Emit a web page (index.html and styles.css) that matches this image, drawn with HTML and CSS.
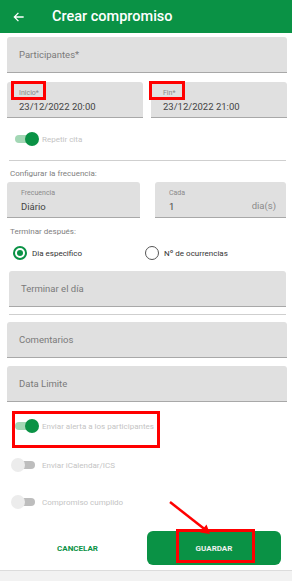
FILE: index.html
```html
<!DOCTYPE html>
<html lang="es">
  <head>
    <meta charset="UTF-8" />
    <title>Crear compromiso</title>
    <meta name="viewport" content="width=device-width, initial-scale=1.0" />
    <link rel="stylesheet" href="styles.css">
  </head>
  <body>
    <header class="topbar">
      <svg class="back" width="14" height="14" viewBox="0 0 24 24">
        <path d="M20 12H5M11 5l-7 7 7 7" fill="none" stroke="#fff" stroke-width="2.2" />
      </svg>
      <h1>Crear compromiso</h1>
    </header>

    <div class="form">
      <div class="field field-wide">
        <span class="placeholder">Participantes*</span>
      </div>

      <div class="row-dates">
        <div class="field field-small">
          <span class="label">Inicio*</span>
          <span class="value">23/12/2022 20:00</span>
          <span class="mark mark-label"></span>
        </div>
        <div class="field field-small">
          <span class="label">Fin*</span>
          <span class="value">23/12/2022 21:00</span>
          <span class="mark mark-label mark-fin"></span>
        </div>
      </div>

      <div class="toggle-row repeat">
        <span class="toggle on"><span class="knob"></span></span>
        <span class="toggle-text">Repetir cita</span>
      </div>

      <div class="divider"></div>

      <div class="section-title first">Configurar la frecuencia:</div>

      <div class="row-freq">
        <div class="field field-small">
          <span class="label">Frecuencia</span>
          <span class="value">Diário</span>
        </div>
        <div class="field field-small">
          <span class="label">Cada</span>
          <span class="value">1</span>
          <span class="suffix">dia(s)</span>
        </div>
      </div>

      <div class="section-title">Terminar después:</div>

      <div class="radios">
        <label class="radio checked"><span class="circle"></span>Dia especifico</label>
        <label class="radio"><span class="circle"></span>Nº de ocurrencias</label>
      </div>

      <div class="field field-end">
        <span class="placeholder">Terminar el día</span>
      </div>
      <div class="divider divider-end"></div>

      <div class="field field-wide field-comments">
        <span class="placeholder">Comentarios</span>
      </div>

      <div class="field field-wide field-limit">
        <span class="placeholder">Data Limite</span>
      </div>

      <div class="toggle-row alert">
        <span class="toggle on"><span class="knob"></span></span>
        <span class="toggle-text">Enviar alerta a los participantes</span>
        <span class="mark mark-alert"></span>
      </div>

      <div class="toggle-row ics">
        <span class="toggle"><span class="knob"></span></span>
        <span class="toggle-text">Enviar iCalendar/ICS</span>
      </div>

      <div class="toggle-row done">
        <span class="toggle"><span class="knob"></span></span>
        <span class="toggle-text">Compromiso cumplido</span>
      </div>

      <div class="actions">
        <button class="btn-cancel">CANCELAR</button>
        <button class="btn-save">
          GUARDAR
          <span class="mark mark-save"></span>
        </button>
        <!-- annotation arrow -->
        <svg class="arrow" width="50" height="40" viewBox="0 0 50 40">
          <path d="M3 2L40 31" stroke="#f00" stroke-width="2.5" fill="none" />
          <path d="M43 34L33 32.5L39.5 24.5Z" fill="#f00" />
        </svg>
      </div>
    </div>

    <div class="bottombar"></div>
  </body>
</html>
```

FILE: styles.css
```css
body {
  margin: 0;
  font-family: Roboto, "Liberation Sans", Arial, sans-serif;
  background: #fff;
  color: #333;
}

.topbar {
  height: 33px;
  background: #0a9245;
  display: flex;
  align-items: center;
  padding-left: 12px;
}

.back {
  display: block;
}

.topbar h1 {
  margin: 0 0 0 26px;
  color: #fff;
  font-size: 14.5px;
  font-weight: 500;
}

.form {
  padding-top: 4px;
}

.field {
  position: relative;
  box-sizing: border-box;
  height: 36px;
  background: #e0e0e0;
  border-bottom: 1px solid #a8a8a8;
  border-radius: 3px 3px 0 0;
}

.field-wide {
  margin: 0 5px 0 7px;
  display: flex;
  align-items: center;
  padding-left: 12px;
}

.placeholder {
  font-size: 9.5px;
  color: #7a7a7a;
}

.row-dates {
  display: grid;
  grid-template-columns: 136px 136px;
  gap: 8px;
  margin: 9px 0 0 7px;
}

.field-small {
  padding: 7px 0 0 12px;
  display: flex;
  flex-direction: column;
}

.label {
  font-size: 7px;
  color: #8a8a8a;
  line-height: 9px;
}

.value {
  font-size: 9.5px;
  color: #444;
  margin-top: 3px;
}

.suffix {
  position: absolute;
  right: 10px;
  top: 18px;
  font-size: 9.5px;
  color: #8a8a8a;
}

.toggle-row {
  position: relative;
  height: 20px;
  display: flex;
  align-items: center;
  padding-left: 11px;
}

.repeat {
  margin-top: 11px;
}

.toggle {
  position: relative;
  width: 27px;
  height: 14px;
  margin-right: 4px;
}

.toggle::before {
  content: "";
  position: absolute;
  left: 4px;
  top: 3px;
  width: 20px;
  height: 8px;
  border-radius: 4px;
  background: #bdbdbd;
}

.toggle.on::before {
  background: #a3d7b5;
}

.knob {
  position: absolute;
  left: 0;
  top: 0;
  width: 14px;
  height: 14px;
  border-radius: 50%;
  background: #ececec;
}

.toggle.on .knob {
  left: 14px;
  background: #0a9245;
}

.toggle-text {
  font-size: 8px;
  color: #c4c4c4;
}

.divider {
  height: 1px;
  background: #cfcfcf;
  margin: 11px 6px 0 9px;
}

.section-title {
  font-size: 8px;
  color: #808080;
  line-height: 12px;
  margin: 8px 0 0 10px;
}

.section-title.first {
  margin-top: 7px;
}

.row-freq {
  display: grid;
  grid-template-columns: 133px 131px;
  gap: 15px;
  margin: 2px 0 0 7px;
}

.row-freq .field-small {
  padding-left: 14px;
}

.radios {
  display: grid;
  grid-template-columns: 132px 1fr;
  height: 16px;
  margin: 7px 0 0 13px;
  align-items: center;
}

.radio {
  display: flex;
  align-items: center;
  font-size: 8px;
  color: #333;
}

.circle {
  box-sizing: border-box;
  width: 14px;
  height: 14px;
  border: 1.5px solid #555;
  border-radius: 50%;
  margin-right: 5px;
  display: flex;
  align-items: center;
  justify-content: center;
}

.radio.checked .circle {
  border: 2px solid #0a9245;
}

.radio.checked .circle::after {
  content: "";
  width: 6px;
  height: 6px;
  border-radius: 50%;
  background: #0a9245;
}

.field-end {
  margin: 10px 6px 0 9px;
  display: flex;
  align-items: center;
  padding-left: 12px;
}

.divider-end {
  margin-top: 7px;
}

.field-comments {
  margin-top: 7px;
}

.field-limit {
  margin-top: 8px;
}

.alert {
  margin-top: 14px;
}

.ics {
  margin-top: 19px;
}

.done {
  margin-top: 17px;
}

.actions {
  position: relative;
  display: grid;
  grid-template-columns: 147px 134px;
  height: 34px;
  margin-top: 19px;
}

.actions button {
  border: none;
  font-family: inherit;
  font-size: 8px;
  font-weight: 700;
  cursor: pointer;
}

.btn-cancel {
  background: none;
  color: #0a9245;
  padding-left: 14px;
}

.btn-save {
  position: relative;
  background: #0a9245;
  color: #f0f0f0;
  border-radius: 6px;
}

.mark {
  position: absolute;
  box-sizing: border-box;
  border: 3px solid #f00;
}

.mark-label {
  left: 4px;
  top: -1px;
  width: 35px;
  height: 19px;
}

.mark-fin {
  left: -2px;
  width: 36px;
}

.mark-alert {
  left: 12px;
  top: -5px;
  width: 148px;
  height: 37px;
}

.mark-save {
  left: 29px;
  top: -2px;
  width: 79px;
  height: 34px;
}

.arrow {
  position: absolute;
  left: 167px;
  top: -31px;
}

.bottombar {
  height: 10px;
  margin-top: 5px;
  background: #f2f2f2;
  border-top: 1px solid #dcdcdc;
}
```
